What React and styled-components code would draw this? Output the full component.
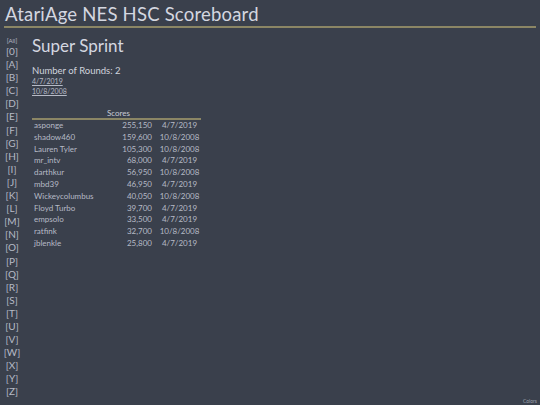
import styled, { createGlobalStyle } from "styled-components";

const GlobalStyle = createGlobalStyle`
  html, body {
    margin: 0;
    padding: 0;
    background: #3a404c;
  }
  body {
    font-family: "Lato", "Liberation Sans", sans-serif;
    color: #c9ccd6;
  }
`;

const Page = styled.div`
  width: 540px;
  height: 405px;
  position: relative;
  overflow: hidden;
  background: #3a404c;
`;

const Title = styled.h1`
  margin: 0 4px 0 4px;
  padding: 4px 0 2px 1px;
  font-size: 18.5px;
  font-weight: 400;
  letter-spacing: 0.2px;
  color: #d4d7e0;
  border-bottom: 2px solid #8b8665;
  line-height: 20px;
`;

const Body = styled.div`
  display: flex;
  padding-top: 8px;
`;

const Sidebar = styled.div`
  width: 24px;
  display: flex;
  flex-direction: column;
  align-items: center;
`;

const LetterLink = styled.div`
  font-size: ${(p) => (p.$small ? "6px" : "10px")};
  line-height: ${(p) => (p.$small ? "9px" : "13.1px")};
  color: #b6bac6;
`;

const Main = styled.div`
  margin-left: 8px;
  display: flex;
  flex-direction: column;
`;

const GameTitle = styled.h2`
  margin: 0;
  font-size: 17px;
  font-weight: 400;
  line-height: 20px;
  color: #d4d7e0;
`;

const Rounds = styled.div`
  margin-top: 9px;
  font-size: 9.5px;
  line-height: 11px;
  color: #d0d3dc;
`;

const DateLink = styled.a`
  font-size: 7px;
  line-height: 9.5px;
  color: #b6bac6;
  text-decoration: underline;
  &:first-of-type {
    margin-top: 1px;
  }
`;

const Table = styled.div`
  margin-top: 12px;
  width: 169px;
  display: flex;
  flex-direction: column;
`;

const TableHead = styled.div`
  text-align: center;
  font-size: 8px;
  line-height: 10px;
  color: #c9ccd6;
  border-bottom: 2px solid #8b8665;
  padding-left: 4px;
`;

const Row = styled.div`
  display: grid;
  grid-template-columns: 68px 50px 51px;
  font-size: 8px;
  line-height: 11.8px;
  color: #b6bac6;
  padding-left: 2px;
  &:first-of-type {
    margin-top: 1px;
  }
`;

const Score = styled.span`
  text-align: right;
`;

const DateCell = styled.span`
  text-align: center;
  padding-left: 4px;
`;

const Footer = styled.div`
  position: absolute;
  right: 3px;
  bottom: 1px;
  font-size: 5px;
  color: #9ea2ae;
`;

const letters = ["0", ..."ABCDEFGHIJKLMNOPQRSTUVWXYZ"];

const scores = [
  ["asponge", "255,150", "4/7/2019"],
  ["shadow460", "159,600", "10/8/2008"],
  ["Lauren Tyler", "105,300", "10/8/2008"],
  ["mr_intv", "68,000", "4/7/2019"],
  ["darthkur", "56,950", "10/8/2008"],
  ["mbd39", "46,950", "4/7/2019"],
  ["Wickeycolumbus", "40,050", "10/8/2008"],
  ["Floyd Turbo", "39,700", "4/7/2019"],
  ["empsolo", "33,500", "4/7/2019"],
  ["ratfink", "32,700", "10/8/2008"],
  ["jblenkle", "25,800", "4/7/2019"],
];

export default function App() {
  return (
    <Page>
      <GlobalStyle />
      <Title>AtariAge NES HSC Scoreboard</Title>
      <Body>
        <Sidebar>
          <LetterLink $small>[All]</LetterLink>
          {letters.map((l) => (
            <LetterLink key={l}>[{l}]</LetterLink>
          ))}
        </Sidebar>
        <Main>
          <GameTitle>Super Sprint</GameTitle>
          <Rounds>Number of Rounds: 2</Rounds>
          <DateLink>4/7/2019</DateLink>
          <DateLink>10/8/2008</DateLink>
          <Table>
            <TableHead>Scores</TableHead>
            {scores.map(([name, score, date]) => (
              <Row key={name}>
                <span>{name}</span>
                <Score>{score}</Score>
                <DateCell>{date}</DateCell>
              </Row>
            ))}
          </Table>
        </Main>
      </Body>
      <Footer>Colors</Footer>
    </Page>
  );
}
